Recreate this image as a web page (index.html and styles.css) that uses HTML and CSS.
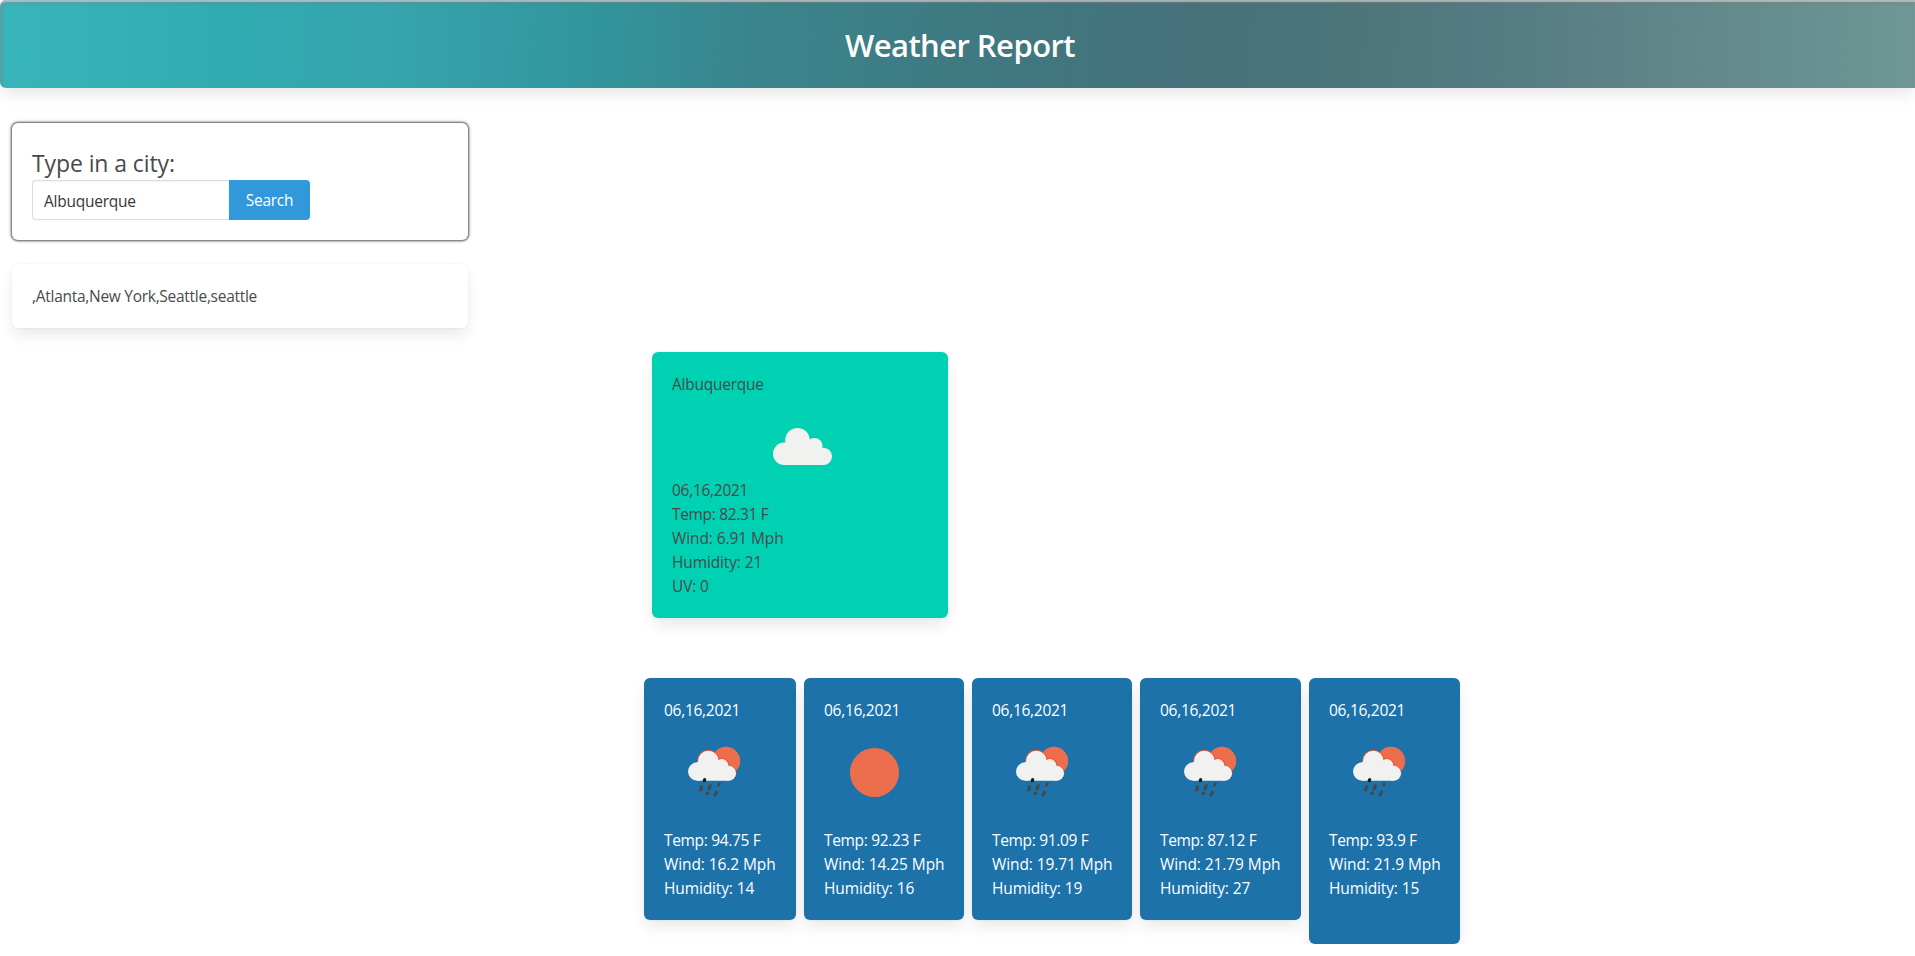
FILE: index.html
```html
<!DOCTYPE html>
<html lang="en">
<head>
<meta charset="utf-8">
<title>Weather Report</title>
<link rel="stylesheet" href="styles.css">
</head>
<body>
<svg class="defs" width="0" height="0" aria-hidden="true">
  <symbol id="shower" viewBox="0 0 100 100">
    <circle cx="62" cy="39" r="14.2" fill="#ec6e4c"/>
    <g fill="#ea5530">
      <circle cx="44.3" cy="39" r="11"/><circle cx="58" cy="43.300" r="7.300"/><path d="M62 43.500a8.300 8.300 0 0 1 10.200 5.200l-4 5z"/>
    </g>
    <g fill="#f1f1f2">
      <circle cx="33.300" cy="49.500" r="9.300"/><circle cx="44.300" cy="39" r="10.300"/><circle cx="57.900" cy="43.500" r="6.400"/><circle cx="64.600" cy="51.300" r="7.500"/>
      <path d="M33 40h12l12 2 8 6v10.800H33z"/>
    </g>
    <g stroke="#484849" stroke-width="3.200" stroke-linecap="round">
      <path stroke="#1b1b1d" d="M40.200 58.700l.5-1"/><path d="M36.500 67.800l1.200-2.800M45 66.800l1.200-2.800M54.700 62.800l.5-.8M42.900 71.800l.6-.8M51.200 72.800l1.200-2.600"/>
    </g>
  </symbol>
</svg>
<header class="hero"><h1 class="title">Weather Report</h1></header>
<main class="page">
  <aside class="sidebar">
    <form class="box search">
      <label class="label" for="city">Type in a city:</label>
      <div class="field"><input class="input" id="city" value="Albuquerque"><button class="button" type="button">Search</button></div>
    </form>
    <div class="box history">,Atlanta,New York,Seattle,seattle</div>
  </aside>
  <section class="box today">
    <p class="city">Albuquerque</p>
    <svg class="cloud" viewBox="0 0 59 37"><g fill="#f1f2f0"><circle cx="11.200" cy="25.800" r="11.200"/><circle cx="24.500" cy="12.300" r="12.300"/><circle cx="41.500" cy="18" r="8"/><circle cx="50.400" cy="28.300" r="8.600"/><path d="M11 15h14l17 4 9 6v12H11z"/></g></svg>
    <p class="date">06,16,2021</p><p class="temp">Temp: 82.31 F</p><p class="wind">Wind: 6.91 Mph</p><p>Humidity: 21</p><p>UV: 0</p>
  </section>
  <section class="forecast">
    <article class="box day w1"><p class="date">06,16,2021</p><svg class="icon"><use href="#shower"/></svg><p class="temp">Temp: 94.75 F</p><p class="wind">Wind: 16.2 Mph</p><p>Humidity: 14</p></article>
    <article class="box day w2"><p class="date">06,16,2021</p><svg class="icon" viewBox="0 0 100 100"><circle cx="50.500" cy="50.500" r="24.500" fill="#ec6e4c"/></svg><p class="temp">Temp: 92.23 F</p><p class="wind">Wind: 14.25 Mph</p><p>Humidity: 16</p></article>
    <article class="box day w2"><p class="date">06,16,2021</p><svg class="icon"><use href="#shower"/></svg><p class="temp">Temp: 91.09 F</p><p class="wind">Wind: 19.71 Mph</p><p>Humidity: 19</p></article>
    <article class="box day w3"><p class="date">06,16,2021</p><svg class="icon"><use href="#shower"/></svg><p class="temp">Temp: 87.12 F</p><p class="wind">Wind: 21.79 Mph</p><p>Humidity: 27</p></article>
    <article class="box day w4"><p class="date">06,16,2021</p><svg class="icon"><use href="#shower"/></svg><p class="temp">Temp: 93.9 F</p><p class="wind">Wind: 21.9 Mph</p><p>Humidity: 15</p></article>
  </section>
</main>
</body>
</html>
```
FILE: styles.css
```css
* { box-sizing: border-box; }
html { overflow: hidden; }
body { margin: 0; background: #fff; color: #4a4a4a; font: 15.500px/24px "Open Sans", "Noto Sans", sans-serif; }
p, h1 { margin: 0; }
p { white-space: nowrap; letter-spacing: -.13px; }
.city { letter-spacing: -.24px; }
.date { letter-spacing: -.28px; }
.temp { letter-spacing: -.34px; }
.wind { letter-spacing: -.09px; }
.defs { display: block; height: 0; }
.hero { height: 88px; padding-top: 22px; border-radius: 6px 0 0 6px; text-align: center;
  background: linear-gradient(92deg, #38b5bb 0, #31abb1 12%, #36a5ae 20%, #32959c 31%, #3a858d 39%, #3f7981 51%, #45717b 62%, #4b757b 70%, #567c84 79%, #648a8c 90%, #6e9795 100%);
  box-shadow: 0 8px 16px -2px rgba(10,10,10,.1), inset 0 2px 1px rgba(220,220,220,.6), inset 2px 3px 4px -1px rgba(125,115,115,.6); }
.title { color: #fff; font-size: 31px; line-height: 46px; font-weight: 600; padding-left: 5px; letter-spacing: -.56px; }
.page { display: flex; flex-direction: column; padding: 35px 12px 0; }
.box { border-radius: 6px; padding: 20px; box-shadow: 0 8px 16px -2px rgba(10,10,10,.1), 0 0 0 1px rgba(10,10,10,.02); }
.sidebar { width: 456px; }
.search { height: 117px; margin-bottom: 24px; background: #fff; box-shadow: 0 0 3px 1px #777, 0 0 1px 1px #999; }
.label { display: block; padding-top: 3px; font-size: 23px; line-height: 34px; letter-spacing: -.1px; }
.field { display: flex; }
.input { width: 197px; height: 40px; padding: 2px 11px 0; border: 1px solid #dbdbdb; border-right: 0; border-radius: 4px 0 0 4px; box-shadow: inset 0 1px 2px rgba(10,10,10,.05); color: #363636; font: inherit; letter-spacing: -.24px; outline: 0; }
.button { width: 81px; height: 40px; padding: 0; border: 0; border-radius: 0 4px 4px 0; background: #3298dc; color: #fff; font: inherit; letter-spacing: -.25px; }
.history { height: 64px; background: #fff; letter-spacing: -.28px; }
.today { width: 296px; height: 266px; margin: 24px 0 0 640px; background: #00d1b2; }
.cloud { display: block; width: 59px; height: 37px; margin: 32px 0 13px 101px; }
.forecast { display: flex; align-items: flex-start; gap: 8px; margin: 60px 0 0 632px; }
.day { height: 242px; background: #1d72aa; color: #fff; }
.icon { display: block; width: 100px; height: 100px; margin-bottom: 6px; }
.w1 { width: 152px; }
.w2 { width: 160px; }
.w3 { width: 161px; }
.w4 { width: 151px; height: 266px; }
```
